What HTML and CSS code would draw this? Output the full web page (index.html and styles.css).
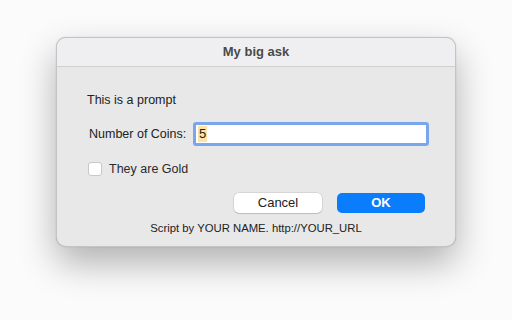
FILE: index.html
```html
<!DOCTYPE html>
<html>
<head>
<meta charset="utf-8">
<link rel="stylesheet" href="styles.css">
</head>
<body>
<div class="stage">
  <div class="window">
    <div class="titlebar">My big ask</div>
    <div class="content">
      <div class="prompt">This is a prompt</div>
      <div class="field-row">
        <span class="label">Number of Coins:</span>
        <div class="input"><span class="sel">5</span></div>
      </div>
      <label class="check-row">
        <span class="checkbox"></span>
        <span class="check-label">They are Gold</span>
      </label>
      <div class="buttons">
        <div class="btn cancel">Cancel</div>
        <div class="btn ok">OK</div>
      </div>
      <div class="footer">Script by YOUR NAME. http://YOUR_URL</div>
    </div>
  </div>
</div>
</body>
</html>
```
FILE: styles.css
```css
html, body {
  margin: 0;
  padding: 0;
  width: 512px;
  height: 320px;
  background: #fbfbfb;
  overflow: hidden;
}
.stage {
  padding: 37px 0 0 56px;
}
.window {
  width: 400px;
  height: 210px;
  box-sizing: border-box;
  border-radius: 10px;
  background: #e8e8e8;
  border: 1px solid #c4c4c4;
  box-shadow: 0 16px 36px rgba(0,0,0,0.3), 0 0 1px rgba(0,0,0,0.3);
  font-family: "Liberation Sans", Arial, sans-serif;
  color: #222;
  overflow: hidden;
}
.titlebar {
  height: 28px;
  background: #efeff2;
  border-bottom: 1px solid #d0d0d0;
  text-align: center;
  font-weight: bold;
  font-size: 13px;
  line-height: 28px;
  color: #4a4a4a;
}
.content {
  padding: 0 0 0 30px;
}
.prompt {
  font-size: 12.5px;
  padding-top: 26px;
  line-height: 15px;
}
.field-row {
  display: flex;
  align-items: center;
  margin-top: 14px;
  padding-left: 2px;
}
.label {
  font-size: 12.5px;
  width: 104px;
}
.input {
  width: 228px;
  height: 18px;
  background: #fff;
  border: 3px solid #7aa6ef;
  border-radius: 3px;
  display: flex;
  align-items: center;
  padding-left: 2px;
  font-size: 13px;
}
.sel {
  background: #fde3a6;
  line-height: 16px;
  padding: 0 1px;
}
.check-row {
  display: flex;
  align-items: center;
  margin-top: 16px;
  padding-left: 1px;
}
.checkbox {
  width: 12px;
  height: 12px;
  background: #fff;
  border: 1px solid #c8c8c8;
  border-radius: 3px;
  margin-right: 7px;
}
.check-label {
  font-size: 12.5px;
  color: #2a2a2a;
}
.buttons {
  display: flex;
  justify-content: flex-end;
  gap: 15px;
  margin-top: 17px;
  padding-right: 30px;
}
.btn {
  width: 88px;
  height: 20px;
  border-radius: 5px;
  text-align: center;
  line-height: 20px;
  font-size: 13px;
}
.cancel {
  background: #fff;
  box-shadow: 0 0 0 0.5px rgba(0,0,0,0.15), 0 1px 1px rgba(0,0,0,0.12);
  color: #222;
}
.ok {
  background: #0a7dfd;
  color: #fff;
  font-weight: bold;
}
.footer {
  text-align: center;
  font-size: 11.3px;
  margin-top: 9px;
  margin-left: -30px;
  color: #222;
}
```
